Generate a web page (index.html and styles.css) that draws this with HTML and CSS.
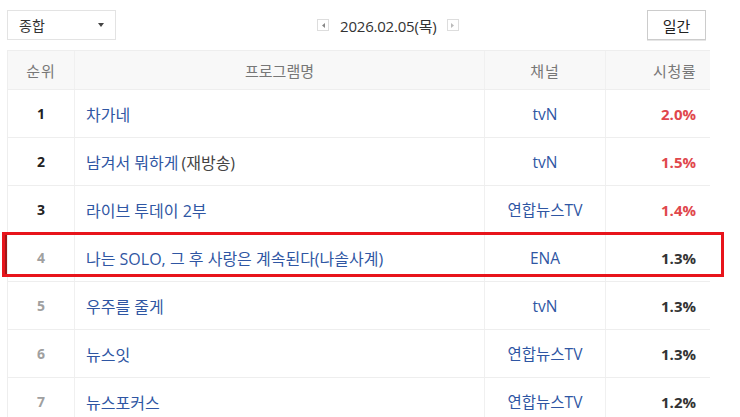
FILE: index.html
```html
<!DOCTYPE html>
<html lang="ko">
<head>
<meta charset="utf-8">
<link rel="stylesheet" href="styles.css">
</head>
<body>
<div class="page">
  <div class="topbar">
    <div class="select"><span>종합</span><span class="caret"></span></div>
    <div class="datenav">
      <span class="navbtn"><svg width="7" height="7" viewBox="0 0 7 7"><path d="M5 1 L2 3.5 L5 6Z" fill="#888"/></svg></span>
      <span class="date">2026.02.05(목)</span>
      <span class="navbtn"><svg width="7" height="7" viewBox="0 0 7 7"><path d="M2 1 L5 3.5 L2 6Z" fill="#bbb"/></svg></span>
    </div>
    <div class="period">일간</div>
  </div>
  <div class="table">
    <div class="row head">
      <div class="c rank">순위</div>
      <div class="c name">프로그램명</div>
      <div class="c ch">채널</div>
      <div class="c rate">시청률</div>
    </div>
    <div class="row">
      <div class="c rank">1</div>
      <div class="c name"><span class="link">차가네</span></div>
      <div class="c ch"><span class="link">tvN</span></div>
      <div class="c rate hot">2.0%</div>
    </div>
    <div class="row">
      <div class="c rank">2</div>
      <div class="c name"><span class="link">남겨서 뭐하게</span> <span class="note">(재방송)</span></div>
      <div class="c ch"><span class="link">tvN</span></div>
      <div class="c rate hot">1.5%</div>
    </div>
    <div class="row">
      <div class="c rank">3</div>
      <div class="c name"><span class="link">라이브 투데이 2부</span></div>
      <div class="c ch"><span class="link">연합뉴스TV</span></div>
      <div class="c rate hot">1.4%</div>
    </div>
    <div class="row marked">
      <div class="c rank low">4</div>
      <div class="c name"><span class="link">나는 SOLO, 그 후 사랑은 계속된다(나솔사계)</span></div>
      <div class="c ch"><span class="link">ENA</span></div>
      <div class="c rate">1.3%</div>
      <div class="highlight"></div>
    </div>
    <div class="row">
      <div class="c rank low">5</div>
      <div class="c name"><span class="link">우주를 줄게</span></div>
      <div class="c ch"><span class="link">tvN</span></div>
      <div class="c rate">1.3%</div>
    </div>
    <div class="row">
      <div class="c rank low">6</div>
      <div class="c name"><span class="link">뉴스잇</span></div>
      <div class="c ch"><span class="link">연합뉴스TV</span></div>
      <div class="c rate">1.3%</div>
    </div>
    <div class="row">
      <div class="c rank low">7</div>
      <div class="c name"><span class="link">뉴스포커스</span></div>
      <div class="c ch"><span class="link">연합뉴스TV</span></div>
      <div class="c rate">1.2%</div>
    </div>
  </div>
</div>
</body>
</html>
```
FILE: styles.css
```css
* { box-sizing: border-box; }
html, body { margin: 0; padding: 0; background: #fff; }
body {
  font-family: "Open Sans", "Noto Sans CJK KR", sans-serif;
  color: #333;
  overflow: hidden;
  height: 417px;
}
.page { width: 740px; padding: 10px 30px 0 7px; }
.topbar {
  display: flex;
  align-items: center;
  height: 30px;
}
.select {
  width: 109px;
  height: 30px;
  border: 1px solid #e3e3e3;
  display: flex;
  align-items: center;
  justify-content: space-between;
  padding: 0 11px 0 11px;
  font-size: 14px;
  color: #333;
}
.caret {
  width: 0; height: 0;
  border-left: 3px solid transparent;
  border-right: 3px solid transparent;
  border-top: 4px solid #444;
}
.datenav {
  display: flex;
  align-items: center;
  margin-left: 201px;
}
.navbtn {
  width: 12px; height: 12px;
  border: 1px solid #ddd;
  display: flex; align-items: center; justify-content: center;
}
.date { font-size: 15px; color: #333; margin: 0 10px 0 11px; letter-spacing: -0.2px; }
.period {
  margin-left: auto;
  margin-right: 4px;
  width: 59px;
  height: 30px;
  border: 1px solid #ccc;
  box-shadow: 0 1px 0 #e6e6e6;
  display: flex; align-items: center; justify-content: center;
  font-size: 15px; color: #222;
}
.table {
  margin-top: 10px;
  width: 703px;
  border-left: 1px solid #eee;
  border-top: 1px solid #eee;
}
.row {
  position: relative;
  display: grid;
  grid-template-columns: 67px 410px 121px 104px;
  height: 48px;
  border-bottom: 1px solid #eee;
}
.row.head { height: 39px; background: #f8f8f8; }
.c {
  display: flex;
  align-items: center;
  font-size: 15px;
  border-right: 1px solid #f0f0f0;
}
.c.rate { border-right: none; }
.head .c { color: #777; font-size: 15px; }
.rank { justify-content: center; font-weight: 700; font-size: 14px; color: #222; }
.rank.low { color: #a0a0a0; }
.head .rank { font-weight: 400; letter-spacing: 1px; }
.name { padding-left: 11px; font-size: 16px; }
.head .name { justify-content: center; padding-left: 0; }
.ch { justify-content: center; font-size: 15.5px; }
.head .ch { letter-spacing: 1px; }
.rate { justify-content: flex-end; padding-right: 14px; font-weight: 700; color: #333; }
.head .rate { font-weight: 400; letter-spacing: 0.5px; }
.rate.hot { color: #e0474c; }
.link { color: #2f56a3; }
.note { color: #444; margin-left: 3px; }
.highlight {
  position: absolute;
  left: -6px;
  top: -2px;
  width: 722px;
  height: 45px;
  border: 3px solid #e8141b;
  box-shadow: inset 2px 0 0 #a01616;
  pointer-events: none;
}
```
